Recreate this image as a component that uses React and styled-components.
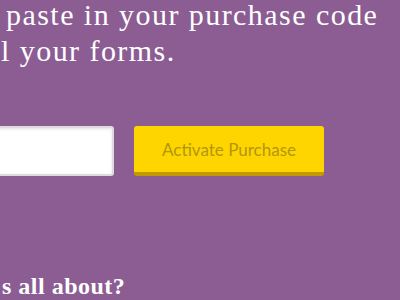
import React from "react";
import styled, { createGlobalStyle } from "styled-components";

const GlobalStyle = createGlobalStyle`
    html, body {
        margin: 0;
        padding: 0;
        background-color: #8b5d93;
        overflow: hidden;
    }
`;

const Page = styled.div`
    width: 400px;
    height: 300px;
    overflow: hidden;
    display: flex;
    flex-direction: column;
    background-color: #8b5d93;
    color: #ffffff;
`;

const Lede = styled.p`
    display: flex;
    flex-direction: column;
    gap: 6px;
    margin: 0;
    font-family: "Liberation Serif", "DejaVu Serif", serif;
    font-size: 30px;
    line-height: 30px;
    letter-spacing: 1.45px;
    white-space: nowrap;
`;

const LedeLine = styled.span`
    display: block;
    padding-left: ${(p) => p.$indent || 0}px;
`;

const FormRow = styled.form`
    display: flex;
    align-items: stretch;
    gap: 20px;
    margin: 60px 0 0 -116px;
    height: 50px;
`;

const CodeInput = styled.input`
    box-sizing: border-box;
    width: 230px;
    height: 50px;
    border: 2px solid #dcdcdc;
    border-radius: 3px;
    background-color: #ffffff;
    box-shadow: inset 0 1px 3px rgba(0, 0, 0, 0.12);
    outline: none;
`;

const ActivateButton = styled.button`
    box-sizing: border-box;
    width: 190px;
    height: 50px;
    padding: 0;
    border: none;
    border-bottom: 4px solid #c29a00;
    border-radius: 3px;
    background-color: #ffd500;
    color: #b1970e;
    font-family: Lato, "Liberation Sans", sans-serif;
    font-size: 17px;
    cursor: pointer;
`;

const SectionTitle = styled.h2`
    margin: 95px 0 0 2px;
    font-family: "Liberation Serif", "DejaVu Serif", serif;
    font-size: 24px;
    font-weight: bold;
    line-height: 30px;
    letter-spacing: 0.5px;
    white-space: nowrap;
`;

export default function App() {
    return (
        <>
            <GlobalStyle />
            <Page>
                <Lede>
                    <LedeLine $indent={6}>paste in your purchase code</LedeLine>
                    <LedeLine $indent={1}>l your forms.</LedeLine>
                </Lede>
                <FormRow onSubmit={(e) => e.preventDefault()}>
                    <CodeInput type="text" aria-label="Purchase code" />
                    <ActivateButton type="submit">Activate Purchase</ActivateButton>
                </FormRow>
                <SectionTitle>s all about?</SectionTitle>
            </Page>
        </>
    );
}
